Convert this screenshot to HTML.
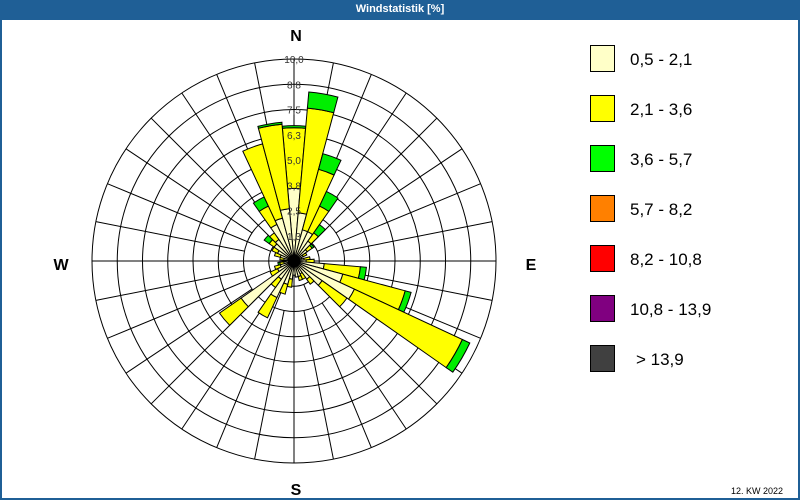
<!DOCTYPE html>
<html><head><meta charset="utf-8"><style>
body{margin:0;width:800px;height:500px;overflow:hidden;background:#fff;font-family:"Liberation Sans",sans-serif}
#f{position:absolute;left:0;top:0;width:796px;height:478px;border:2px solid #1f5f96;border-top:20px solid #1f5f96;background:#fff}
#t{position:absolute;top:3px;left:0;width:800px;text-align:center;color:#fff;font:bold 11px "Liberation Sans",sans-serif}
</style></head><body>
<div id="f"></div><div id="t">Windstatistik [%]</div>
<svg id="s" width="800" height="500" style="position:absolute;left:0;top:0"></svg>
<script>
var cx=294,cy=261,R=202,k=20.2,o='';
function P(a,r){a=a*Math.PI/180;return [(cx+r*Math.sin(a)).toFixed(1),(cy-r*Math.cos(a)).toFixed(1)];}
for(var i=1;i<=8;i++)o+='<circle cx="'+cx+'" cy="'+cy+'" r="'+(R*i/8)+'" fill="none" stroke="#000" stroke-width="1"/>';
for(var a=0;a<360;a+=11.25){var p=P(a,R),q=P(a,a%90==0?0:(a%22.5==0?R/8:R/4));o+='<line x1="'+q[0]+'" y1="'+q[1]+'" x2="'+p[0]+'" y2="'+p[1]+'" stroke="#000"/>';}
var d={0:[3.6,6.6,6.7],10:[2.4,7.6,8.4],20:[1.6,4.7,5.5],30:[1.6,3.0,3.8],40:[1.2,1.7,2.2],50:[0.8,1.1,1.2],60:[0.5,0.7],70:[0.4],80:[0.5,0.8],90:[0.6,1.0],100:[1.5,3.3,3.6],110:[2.5,5.7,6.0],120:[3.3,9.2,9.6],130:[1.7,3.2],140:[1.1,1.4],150:[0.7,1.0],160:[0.8,1.0],170:[0.8],180:[0.7],190:[0.9,1.3],200:[1.2,1.7],210:[2.0,3.1],220:[1.1,1.6],230:[3.2,4.5],240:[0.9,1.3],250:[0.7,1.0],260:[0.5,0.7,0.8],270:[0.4],280:[0.5,0.7],290:[0.7,1.0],300:[0.9,1.2],310:[1.2,1.5,1.8],320:[1.3,1.7],330:[2.0,3.0,3.5],340:[2.2,6.0],350:[2.6,6.8,6.9]};
var col=['#ffffc8','#ffff00','#00ee00'];
for(var a in d){a=+a;var v=d[a],prev=0;for(var j=0;j<v.length;j++){var r0=prev*k,r1=v[j]*k,p1=P(a-5,r0),p2=P(a-5,r1),p3=P(a+5,r1),p4=P(a+5,r0);
o+='<path d="M'+p1+'L'+p2+'A'+r1+' '+r1+' 0 0 1 '+p3+'L'+p4+(r0>0?'A'+r0+' '+r0+' 0 0 0 '+p1:'')+'Z" fill="'+col[j]+'" stroke="#000" stroke-width="1"/>';prev=v[j];}}
o+='<circle cx="'+cx+'" cy="'+cy+'" r="6" fill="#000"/>';
var lb=['1,3','2,5','3,8','5,0','6,3','7,5','8,8','10,0'];
for(var i=0;i<8;i++)o+='<text x="'+cx+'" y="'+(cy-R*(i+1)/8+4)+'" font-size="10" text-anchor="middle" fill="#333">'+lb[i]+'</text>';
o+='<text x="296" y="41" font-size="16" font-weight="bold" text-anchor="middle">N</text><text x="296" y="495" font-size="16" font-weight="bold" text-anchor="middle">S</text><text x="61" y="270" font-size="16" font-weight="bold" text-anchor="middle">W</text><text x="531" y="270" font-size="16" font-weight="bold" text-anchor="middle">E</text>';
var L=[['#ffffc8','0,5 - 2,1'],['#ffff00','2,1 - 3,6'],['#00ff00','3,6 - 5,7'],['#ff8000','5,7 - 8,2'],['#ff0000','8,2 - 10,8'],['#800080','10,8 - 13,9'],['#404040','&gt; 13,9']];
for(var i=0;i<7;i++){var y=45+50*i;o+='<rect x="590.5" y="'+(y+.5)+'" width="24" height="26" fill="'+L[i][0]+'" stroke="#000"/><text x="'+(i==6?636:630)+'" y="'+(y+20)+'" font-size="17" fill="#000">'+L[i][1]+'</text>';}
o+='<text x="783" y="494" font-size="9" text-anchor="end">12. KW 2022</text>';
document.getElementById('s').innerHTML=o;
</script>
</body></html>
